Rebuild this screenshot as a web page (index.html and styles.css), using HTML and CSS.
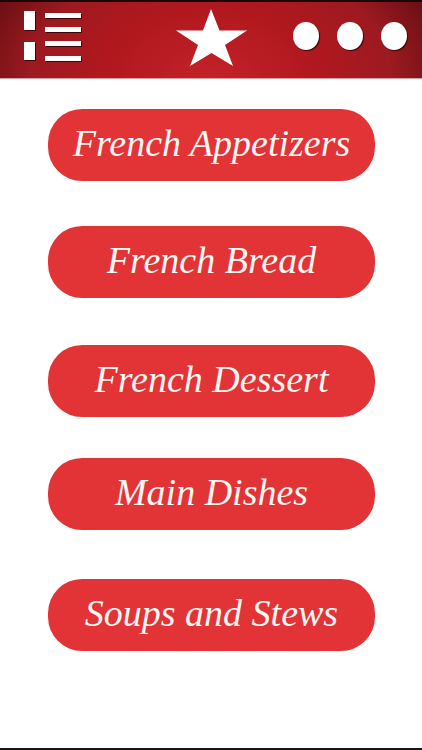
FILE: index.html
```html
<!DOCTYPE html>
<html lang="en">
<head>
<meta charset="UTF-8" />
<meta name="viewport" content="width=device-width, initial-scale=1" />
<title>French Recipes</title>
<link rel="stylesheet" href="styles.css">
</head>
<body>
<header class="topbar">
  <svg class="list-icon" width="60" height="52" viewBox="0 0 60 52" aria-label="Menu">
    <g class="icon-shadow" transform="translate(1 1)">
      <rect x="0" y="0" width="11" height="19" />
      <rect x="0" y="31" width="11" height="18" />
      <rect x="21" y="2" width="36" height="5" />
      <rect x="21" y="16" width="36" height="5" />
      <rect x="21" y="30" width="36" height="5" />
      <rect x="21" y="45" width="36" height="5" />
    </g>
    <g class="icon-fill">
      <rect x="0" y="0" width="11" height="19" />
      <rect x="0" y="31" width="11" height="18" />
      <rect x="21" y="2" width="36" height="5" />
      <rect x="21" y="16" width="36" height="5" />
      <rect x="21" y="30" width="36" height="5" />
      <rect x="21" y="45" width="36" height="5" />
    </g>
  </svg>
  <svg class="star-icon" width="72" height="58" viewBox="0 0 72 58" aria-label="Favorites">
    <path class="icon-fill" d="M35 0 L43.500 21.500 L71 21.500 L49 36 L57 57 L35.500 44 L14 57 L22 36 L0 21.500 L27 21.500 Z" />
  </svg>
  <div class="dots">
    <span class="dot"></span>
    <span class="dot"></span>
    <span class="dot"></span>
  </div>
</header>

<main class="menu">
  <a class="menu-btn" href="#">French Appetizers</a>
  <a class="menu-btn" href="#">French Bread</a>
  <a class="menu-btn" href="#">French Dessert</a>
  <a class="menu-btn" href="#">Main Dishes</a>
  <a class="menu-btn" href="#">Soups and Stews</a>
</main>
</body>
</html>
```

FILE: styles.css
```css
:root {
  --button-red: #e23437;
  --text-light: #fdf6f2;
}
html, body {
  height: 100%;
}
body {
  margin: 0;
  padding: 0;
  background: white;
  font-family: "Liberation Serif", serif;
  box-sizing: border-box;
  border-bottom: 2px solid #161616;
}
a {
  text-decoration: none;
}
.topbar {
  height: 79px;
  box-sizing: border-box;
  border-top: 2px solid #1c0506;
  border-bottom: 1px solid #d9a0a2;
  padding: 0 15px 0 24px;
  display: grid;
  grid-template-columns: 1fr auto 1fr;
  align-items: center;
  background: radial-gradient(ellipse 240px 160px at 50% 100%, #c22228 0%, #b0181e 45%, #9c1a20 75%, #6a0f14 100%);
}
.list-icon {
  margin-bottom: 7px;
}
.star-icon {
  margin-right: 7px;
  margin-bottom: 4px;
}
.icon-fill {
  fill: white;
}
.icon-shadow {
  fill: #3d0507;
}
.dots {
  display: flex;
  justify-content: flex-end;
  gap: 18px;
  margin-bottom: 9px;
}
.dot {
  width: 26px;
  height: 28px;
  border-radius: 50%;
  background: white;
  box-shadow: 1px 1px 1px #3d0507;
}
.menu {
  display: flex;
  flex-direction: column;
  align-items: center;
  padding: 30px 0 0 0;
}
.menu-btn {
  width: 327px;
  height: 72px;
  margin-left: 1px;
  border-radius: 34px;
  background: var(--button-red);
  color: var(--text-light);
  font-size: 38px;
  font-style: italic;
  line-height: 68px;
  text-align: center;
}
.menu-btn:nth-child(2) {
  margin-top: 45px;
}
.menu-btn:nth-child(3) {
  margin-top: 47px;
}
.menu-btn:nth-child(4) {
  margin-top: 41px;
}
.menu-btn:nth-child(5) {
  margin-top: 49px;
}
```
